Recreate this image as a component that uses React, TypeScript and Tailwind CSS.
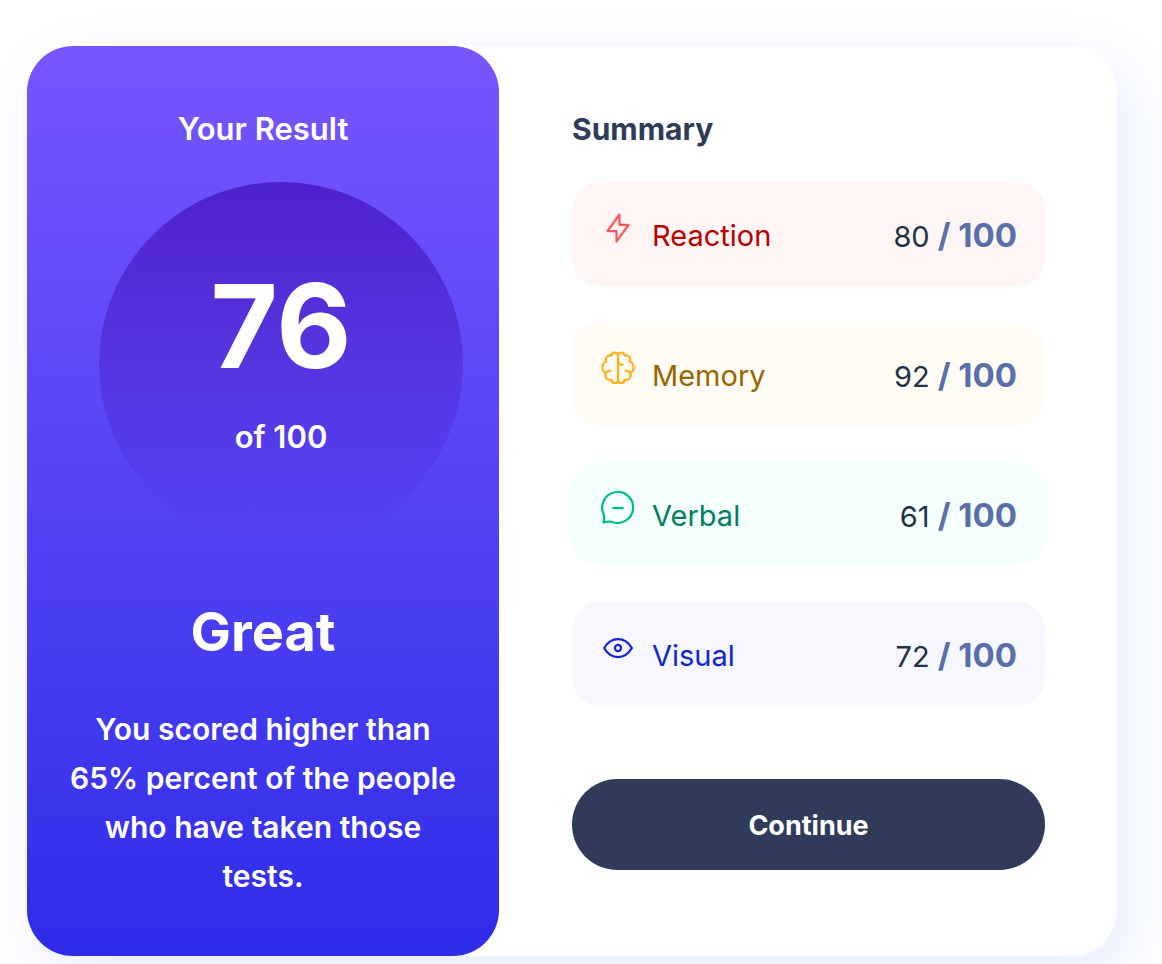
import React from "react";

type Category = {
  name: string;
  score: number;
  card: string;
  label: string;
  stroke: string;
  icon: React.ReactNode;
};

const categories: Category[] = [
  {
    name: "Reaction",
    score: 80,
    card: "bg-[#fff5f4]",
    label: "text-[#b80000]",
    stroke: "text-[#ff5757]",
    icon: <path d="M10.833 8.333V2.5l-6.666 9.167h5V17.5l6.666-9.167h-5Z" />,
  },
  {
    name: "Memory",
    score: 92,
    card: "bg-[#fffcf5]",
    label: "text-[#9a6400]",
    stroke: "text-[#ffb01f]",
    icon: (
      <>
        <path d="M10 2.9C9.6.9 6.6.9 6.2 3.1C4 2.6 2.6 4.4 3.5 6.4C.8 7.3.6 11.6 3.2 12.8C2.4 15.2 4 17 6.2 16.6C6.8 19 9.6 18.8 10 17.1Z" />
        <path d="M10 2.9C10.4.9 13.4.9 13.8 3.1C16 2.6 17.4 4.4 16.5 6.4C19.2 7.3 19.4 11.6 16.8 12.8C17.6 15.2 16 17 13.8 16.6C13.2 19 10.4 18.8 10 17.1" />
        <path d="M3.2 12.8q.8-1.4 2.6-1.4M16.8 12.8q-.8-1.4-2.6-1.4M10 6.6q.4 1.6 2.6 1.6" />
      </>
    ),
  },
  {
    name: "Verbal",
    score: 61,
    card: "bg-[#f5fffd]",
    label: "text-[#00805f]",
    stroke: "text-[#00bd91]",
    icon: (
      <>
        <path d="M1.9 18C2.3 16.4 2.6 15.2 2.2 13.7A8.6 8.6 0 1 1 6.4 17.6C5.2 17.3 4 17.7 1.9 18Z" />
        <path d="M7.4 10h5.2" />
      </>
    ),
  },
  {
    name: "Visual",
    score: 72,
    card: "bg-[#f6f7ff]",
    label: "text-[#1125d4]",
    stroke: "text-[#1125d4]",
    icon: (
      <>
        <path d="M2.3 10C4 7 6.7 5 10 5s6 2 7.7 5c-1.7 3-4.4 5-7.7 5s-6-2-7.7-5Z" />
        <circle cx="10" cy="10" r="1.7" />
      </>
    ),
  },
];

function ScoreRow({ item }: { item: Category }) {
  return (
    <li className={`flex h-[104px] items-center rounded-[28px] px-7 pt-1 ${item.card}`}>
      <svg
        viewBox="0 0 20 20"
        className={`mb-4 size-9 shrink-0 ${item.stroke}`}
        fill="none"
        stroke="currentColor"
        strokeWidth="1.25"
        strokeLinecap="round"
        strokeLinejoin="round"
        aria-hidden="true"
      >
        {item.icon}
      </svg>
      <span className={`ml-4 text-[29px] leading-9 ${item.label}`}>{item.name}</span>
      <span className="ml-auto flex items-baseline gap-2 text-[29px] leading-9 text-[#1e3347]">
        {item.score}
        <strong className="text-[33px] font-bold text-[#5a6fa9]">/ 100</strong>
      </span>
    </li>
  );
}

export default function App() {
  return (
    <main className="min-h-screen overflow-hidden bg-white pt-[46px] pr-[45px] pb-2 pl-[27px] font-['Inter',sans-serif]">
      <div className="grid rounded-[46px] bg-white shadow-[14px_20px_60px_rgba(51,102,255,0.12)] md:grid-cols-[472fr_618fr]">
        <section className="flex flex-col rounded-[46px] bg-linear-to-b from-[#7755ff] to-[#2e2be9] px-9 pt-16 pb-[55px] text-center text-white">
          <h1 className="text-[31px] leading-[38px] font-semibold">Your Result</h1>
          <div className="mt-[34px] ml-9 flex aspect-square flex-col items-center rounded-full bg-linear-to-b from-[#4d21c9] to-[#2421ca00] pt-[84px]">
            <p className="text-[116px] leading-[120px] font-bold">76</p>
            <p className="mt-8 text-[31px] leading-[38px] font-semibold">of 100</p>
          </div>
          <h2 className="mt-[54px] text-[54px] leading-16 font-bold">Great</h2>
          <p className="mt-[41px] text-[30px] leading-[49px] font-semibold">
            You scored higher than 65% percent of the people who have taken those tests.
          </p>
        </section>
        <section className="flex flex-col pt-16 pr-[72px] pb-[86px] pl-[73px]">
          <h2 className="text-[30px] leading-[38px] font-bold text-[#303b5a]">Summary</h2>
          <ul className="mt-[34px] flex flex-col gap-9">
            {categories.map((item) => (
              <ScoreRow key={item.name} item={item} />
            ))}
          </ul>
          <button
            type="button"
            className="mt-[73px] h-[91px] cursor-pointer rounded-full bg-[#303b5a] pt-1 text-[27px] font-bold text-white"
          >
            Continue
          </button>
        </section>
      </div>
    </main>
  );
}
